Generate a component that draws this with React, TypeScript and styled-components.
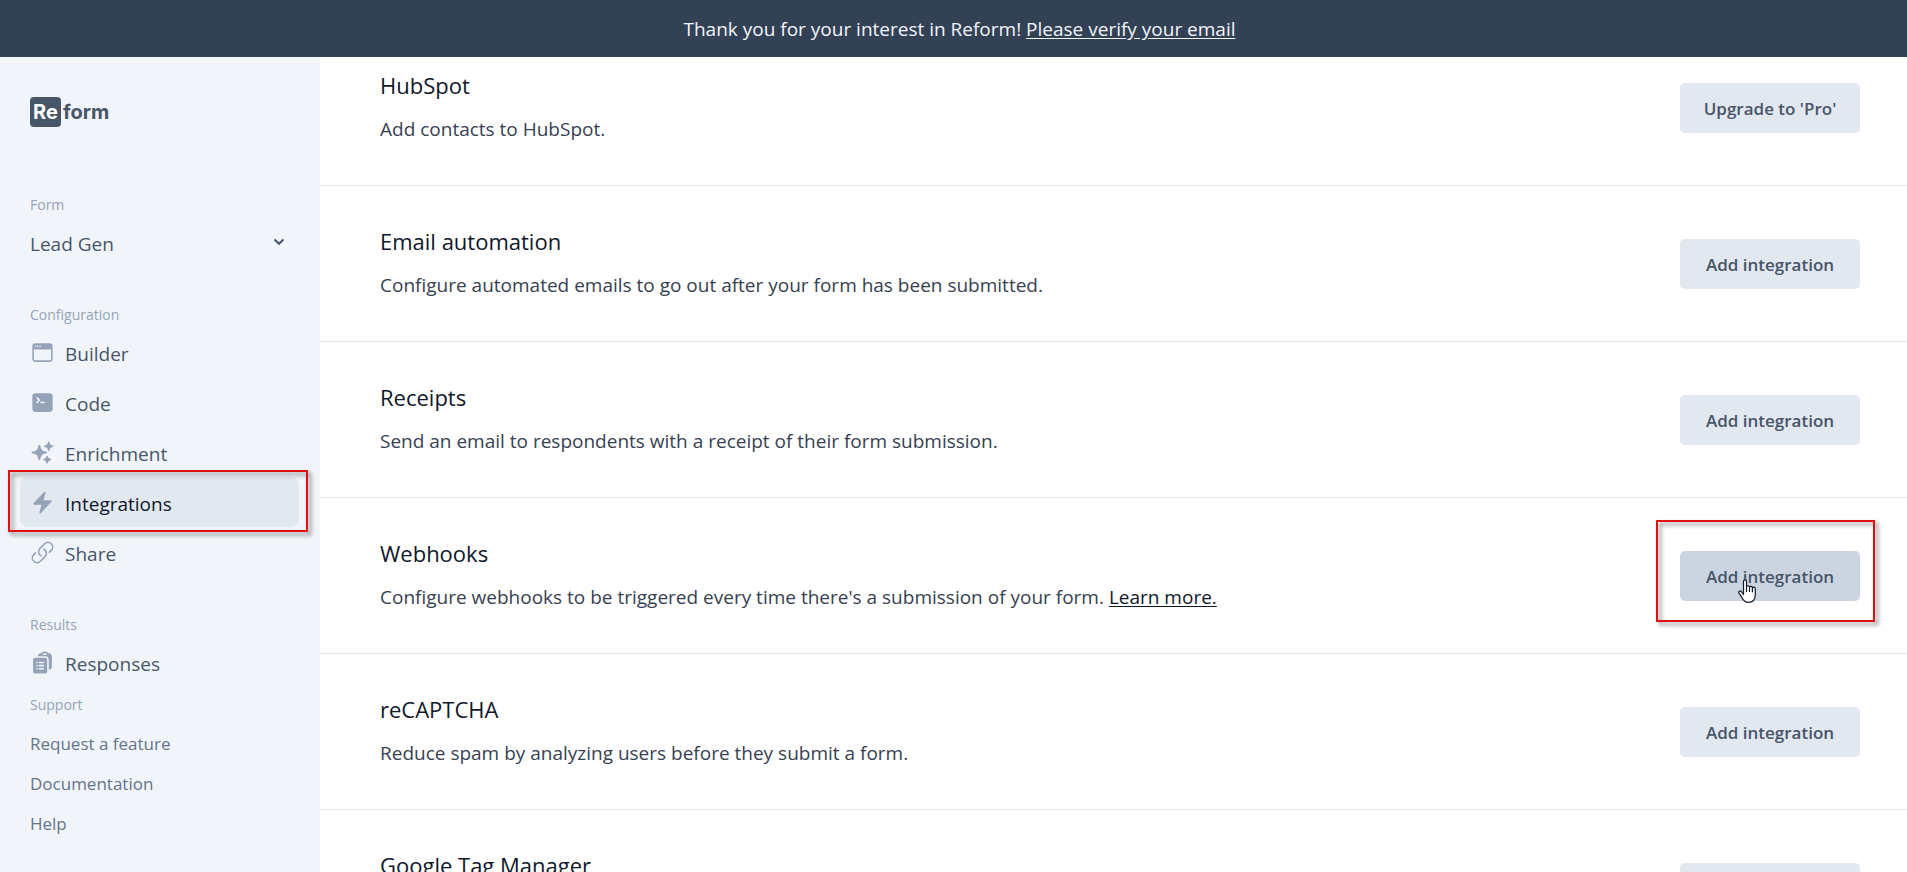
import React from 'react';
import styled, { createGlobalStyle, css } from 'styled-components';
import {
  HiBolt,
  HiClipboardDocumentList,
  HiCommandLine,
  HiOutlineLink,
  HiSparkles,
  HiWindow,
} from 'react-icons/hi2';

const GlobalStyle = createGlobalStyle`
  *, *::before, *::after { box-sizing: border-box; }
  body { margin: 0; background: #ffffff; }
  body, button, select { font-family: 'Segoe UI', 'Open Sans', sans-serif; }
`;

const Page = styled.div`
  display: flex;
  flex-direction: column;
  height: 100vh;
  overflow: hidden;
`;

const Banner = styled.div`
  position: relative;
  z-index: 1;
  flex: none;
  padding: 15px 0 14px 12px;
  background: #334155;
  color: #f1f5f9;
  font-size: 19px;
  line-height: 28px;
  text-align: center;
`;

const BannerLink = styled.a`
  color: inherit;
  text-decoration: underline;
  text-underline-offset: 2px;
`;

const Body = styled.div`
  display: flex;
  flex: 1;
  min-height: 0;
`;

const Sidebar = styled.aside`
  flex: none;
  width: 320px;
  padding: 40px 21px 0 20px;
  background: #f1f5f9;
`;

const Logo = styled.a`
  display: flex;
  align-items: center;
  height: 30px;
  margin: 0 10px 66px;
  color: #475569;
  font-family: Inter, sans-serif;
  font-size: 20px;
  font-weight: 700;
  text-decoration: none;
`;

const LogoMark = styled.span`
  width: 31px;
  margin-right: 2px;
  border-radius: 4px;
  background: #475569;
  color: #ffffff;
  line-height: 30px;
  text-align: center;
`;

const Group = styled.div<{ $gap?: number }>`
  margin-bottom: ${(p) => p.$gap ?? 36}px;
`;

const labelStyle = css`
  display: block;
  margin: 0;
  padding: 0 10px;
  color: #94a3b8;
  font-size: 14px;
  font-weight: 400;
  line-height: 24px;
`;

const GroupTitle = styled.h2`
  ${labelStyle}
`;

const FieldLabel = styled.label`
  ${labelStyle}
`;

const SelectWrap = styled.div`
  display: grid;
  align-items: center;
  > * { grid-area: 1 / 1; }
`;

const Select = styled.select`
  width: 100%;
  height: 50px;
  padding: 4px 10px 0;
  border: 0;
  appearance: none;
  background: transparent;
  color: #475569;
  font-size: 19px;
`;

const Chevron = styled.svg`
  justify-self: end;
  margin: 2px 14px 0 0;
  pointer-events: none;
`;

const NavItem = styled.a<{ $active?: boolean }>`
  position: relative;
  display: flex;
  align-items: center;
  gap: 10px;
  height: 50px;
  padding: 0 10px;
  border-radius: 8px;
  background: ${(p) => (p.$active ? '#e2e8f0' : 'transparent')};
  color: ${(p) => (p.$active ? '#0f172a' : '#475569')};
  font-size: 19px;
  text-decoration: none;

  > svg {
    width: 25px;
    height: 25px;
    color: #94a3b8;
  }
`;

const NavText = styled.span`
  padding-top: 4px;
`;

const SupportLink = styled.a`
  display: block;
  padding: 0 10px;
  color: #64748b;
  font-size: 17px;
  line-height: 40px;
  text-decoration: none;
`;

const SupportLinks = styled.nav`
  padding-top: 7px;
`;

const Main = styled.main`
  flex: 1;
  min-width: 0;
  overflow: hidden;
`;

/* The list is shown part-way scrolled beneath the banner. */
const List = styled.div`
  margin-top: -27px;
`;

const Row = styled.section`
  display: flex;
  align-items: center;
  justify-content: space-between;
  height: 156px;
  padding: 0 47px 0 60px;
  border-bottom: 1px solid #e5e7eb;
`;

const RowBody = styled.div`
  padding-bottom: 3px;
`;

const RowTitle = styled.h3`
  margin: 0 0 15px;
  color: #0f172a;
  font-size: 22px;
  font-weight: 400;
  line-height: 30px;
`;

const RowText = styled.p`
  margin: 0;
  color: #374151;
  font-size: 19px;
  line-height: 28px;
`;

const TextLink = styled.a`
  color: #0f172a;
  text-decoration: underline;
  text-underline-offset: 2px;
`;

const ActionSlot = styled.div`
  position: relative;
  flex: none;
`;

const Action = styled.button<{ $hovered?: boolean }>`
  display: block;
  width: 180px;
  height: 50px;
  padding: 2px 0 0;
  border: 0;
  border-radius: 5px;
  background: ${(p) => (p.$hovered ? '#cbd5e1' : '#e2e8f0')};
  color: #475569;
  font-size: 17px;
  font-weight: 600;
`;

const Highlight = styled.span<{ $inset: string }>`
  position: absolute;
  inset: ${(p) => p.$inset};
  border: 2px solid #e01010;
  filter: drop-shadow(3px 3px 2px rgba(0, 0, 0, 0.5));
  pointer-events: none;
`;

const Pointer = styled.svg`
  position: absolute;
  top: 28px;
  left: 58px;
  pointer-events: none;
`;

const configuration = [
  { name: 'Builder', icon: <HiWindow /> },
  { name: 'Code', icon: <HiCommandLine /> },
  { name: 'Enrichment', icon: <HiSparkles /> },
  { name: 'Integrations', icon: <HiBolt />, active: true },
  { name: 'Share', icon: <HiOutlineLink /> },
];

const integrations: {
  name: string;
  text: string;
  action?: string;
  link?: string;
  hovered?: boolean;
}[] = [
  { name: 'HubSpot', text: 'Add contacts to HubSpot.', action: "Upgrade to 'Pro'" },
  {
    name: 'Email automation',
    text: 'Configure automated emails to go out after your form has been submitted.',
  },
  {
    name: 'Receipts',
    text: 'Send an email to respondents with a receipt of their form submission.',
  },
  {
    name: 'Webhooks',
    text: "Configure webhooks to be triggered every time there's a submission of your form.",
    link: 'Learn more.',
    hovered: true,
  },
  { name: 'reCAPTCHA', text: 'Reduce spam by analyzing users before they submit a form.' },
  { name: 'Google Tag Manager', text: 'Add Google Tag Manager to your form.' },
];

export default function App() {
  return (
    <Page>
      <GlobalStyle />
      <Banner>
        Thank you for your interest in Reform!{' '}
        <BannerLink href="#verify">Please verify your email</BannerLink>
      </Banner>
      <Body>
        <Sidebar>
          <Logo href="#home">
            <LogoMark>Re</LogoMark>form
          </Logo>
          <Group>
            <FieldLabel htmlFor="form">Form</FieldLabel>
            <SelectWrap>
              <Select id="form" defaultValue="Lead Gen">
                <option>Lead Gen</option>
              </Select>
              <Chevron width="12" height="12" viewBox="0 0 12 12" fill="none" stroke="#475569" strokeWidth="2">
                <path d="M1.5 2.5 6 6.8l4.500-4.300" />
              </Chevron>
            </SelectWrap>
          </Group>
          <Group>
            <GroupTitle>Configuration</GroupTitle>
            <nav>
              {configuration.map((item) => (
                <NavItem key={item.name} href={`#${item.name.toLowerCase()}`} $active={item.active}>
                  {item.icon}
                  <NavText>{item.name}</NavText>
                  {item.active && <Highlight $inset="-7px -9px -5px -12px" />}
                </NavItem>
              ))}
            </nav>
          </Group>
          <Group $gap={6}>
            <GroupTitle>Results</GroupTitle>
            <nav>
              <NavItem href="#responses">
                <HiClipboardDocumentList />
                <NavText>Responses</NavText>
              </NavItem>
            </nav>
          </Group>
          <GroupTitle>Support</GroupTitle>
          <SupportLinks>
            <SupportLink href="#feature">Request a feature</SupportLink>
            <SupportLink href="#docs">Documentation</SupportLink>
            <SupportLink href="#help">Help</SupportLink>
          </SupportLinks>
        </Sidebar>
        <Main>
          <List>
            {integrations.map((item) => (
              <Row key={item.name}>
                <RowBody>
                  <RowTitle>{item.name}</RowTitle>
                  <RowText>
                    {item.text}
                    {item.link && (
                      <>
                        {' '}
                        <TextLink href="#webhooks">{item.link}</TextLink>
                      </>
                    )}
                  </RowText>
                </RowBody>
                <ActionSlot>
                  <Action type="button" $hovered={item.hovered}>
                    {item.action ?? 'Add integration'}
                  </Action>
                  {item.hovered && (
                    <>
                      <Highlight $inset="-31px -15px -21px -24px" />
                      <Pointer width="19" height="25" viewBox="0 0 19 25" fill="#ffffff" stroke="#111827" strokeWidth="1.200" strokeLinejoin="round" strokeLinecap="round">
                        <path d="M5.500 15.500V2.600c0-2.400 3-2.400 3 0v5.200c.3-1.500 2.800-1.400 3 .3.500-1.300 2.700-1 2.900.6.700-1.100 2.900-.7 2.900 1.300v5.600c0 4.700-2.300 7.800-6.800 7.800-4 0-5.300-2.300-6.800-5.200L1 14.200c-1-1.900 1-3 2.400-1.500z" />
                        <path d="M8.500 7.800v4.600M11.500 8.500v4M14.400 9.200v3.600" />
                      </Pointer>
                    </>
                  )}
                </ActionSlot>
              </Row>
            ))}
          </List>
        </Main>
      </Body>
    </Page>
  );
}
